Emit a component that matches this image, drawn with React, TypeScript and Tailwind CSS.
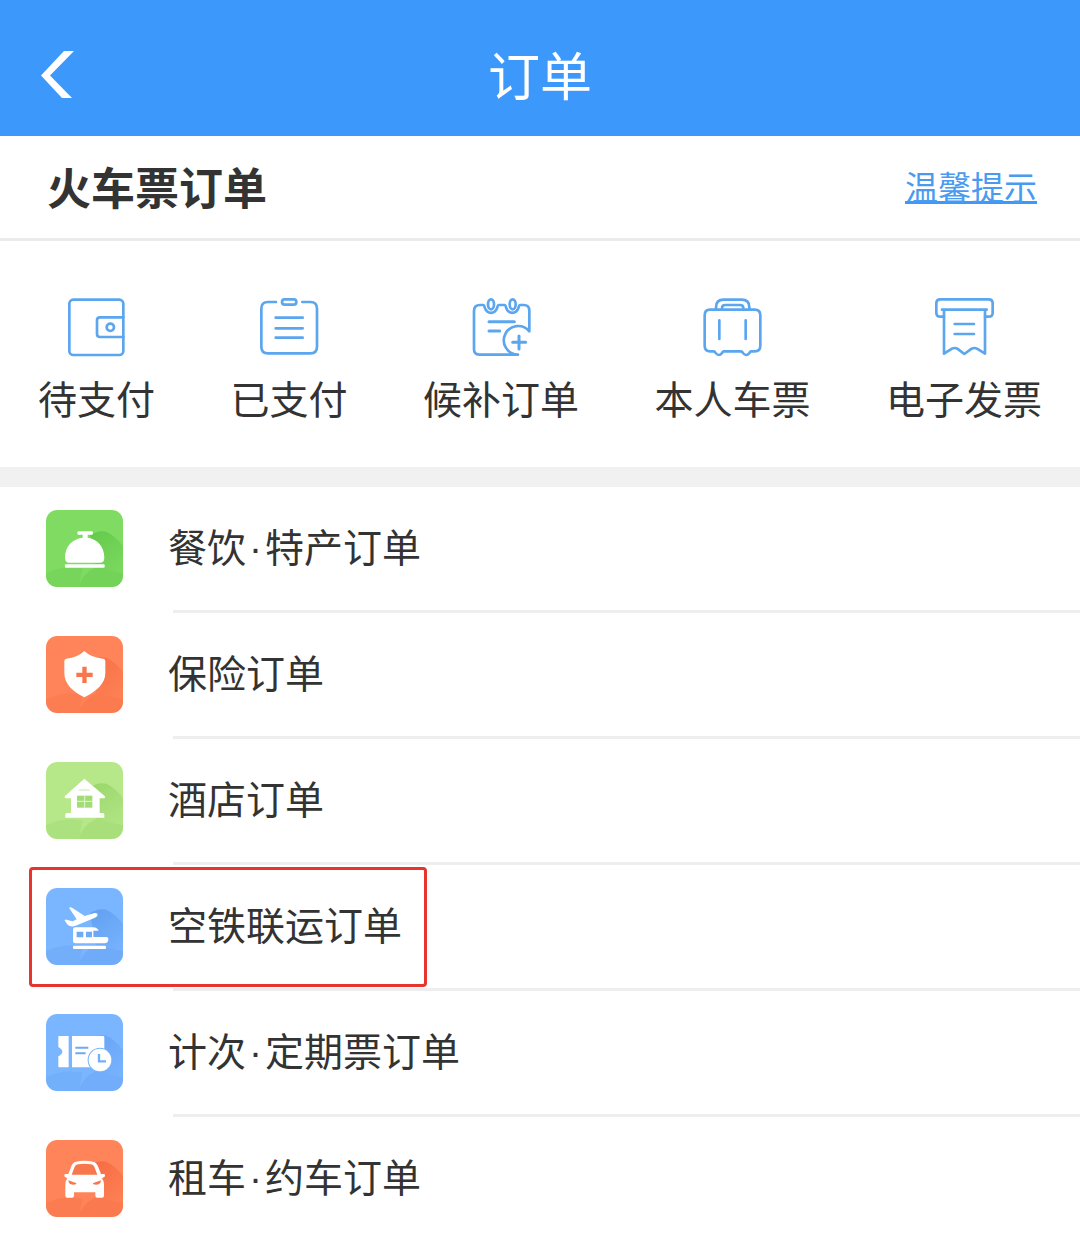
import type { ReactNode } from 'react';

interface QuickEntry {
  label: string;
  icon: ReactNode;
}

interface OrderEntry {
  label: string;
  icon: ReactNode;
  highlighted?: boolean;
}

const LineIcon = ({ children }: { children: ReactNode }) => (
  <svg
    viewBox="0 0 180 180"
    className="size-[60px] text-[#5ba6ee]"
    fill="none"
    stroke="currentColor"
    strokeWidth="8"
    strokeLinecap="round"
    strokeLinejoin="round"
    aria-hidden="true"
  >
    {children}
  </svg>
);

interface TileProps {
  id: string;
  base: string;
  shade: string;
  children: ReactNode;
}

// Rounded app tile with a soft long shadow behind the white glyph
const Tile = ({ id, base, shade, children }: TileProps) => (
  <svg viewBox="0 0 231 231" className="size-[77px] shrink-0" aria-hidden="true">
    <defs>
      <clipPath id={`${id}-clip`}>
        <rect width="231" height="231" rx="34" />
      </clipPath>
      <linearGradient id={`${id}-shadow`} x1="0.2" y1="0" x2="0.8" y2="1">
        <stop offset="0" stopColor={shade} />
        <stop offset="1" stopColor={shade} stopOpacity="0.2" />
      </linearGradient>
    </defs>
    <g clipPath={`url(#${id}-clip)`}>
      <rect width="231" height="231" fill={base} />
      <path d="M0 190 Q50 164 110 176 L98 231 H0z" fill={shade} opacity="0.35" />
      <path d="M98 231 Q108 190 150 172 L231 190 V231z" fill={shade} opacity="0.5" />
      <path d="M132 76 Q160 58 182 66 Q206 76 231 108 V190 L150 172z" fill={`url(#${id}-shadow)`} />
    </g>
    {children}
  </svg>
);

const quickEntries: QuickEntry[] = [
  {
    label: '待支付',
    icon: (
      <LineIcon>
        <rect x="7" y="8" width="162" height="166" rx="12" />
        <path d="M169 61H99q-9 0-9 9v41q0 9 9 9h70" />
        <circle cx="130" cy="91" r="11" />
      </LineIcon>
    ),
  },
  {
    label: '已支付',
    icon: (
      <LineIcon>
        <path d="M51 15H27q-20 0-20 20v114q0 20 20 20h127q20 0 20-20V35q0-20-20-20h-24" />
        <rect x="69" y="7" width="43" height="16" rx="8" />
        <path d="M50 62h81M50 94h81M50 122h81" />
      </LineIcon>
    ),
  },
  {
    label: '候补订单',
    icon: (
      <LineIcon>
        <path d="M141 173H25q-16 0-16-16V42q0-18 18-18h10c4 0 3 5 5 10 7 18 29 18 36 0 2-5 1-10 5-10h18c4 0 3 5 5 10 7 18 29 18 36 0 2-5 1-10 5-10h11q17 0 17 17v62A43 43 0 1 0 141 173" />
        <ellipse cx="60" cy="22" rx="9" ry="15" />
        <ellipse cx="125" cy="22" rx="9" ry="15" />
        <path d="M54 74h76M54 102h32M125 136h39M144 117v39" strokeWidth="9" />
      </LineIcon>
    ),
  },
  {
    label: '本人车票',
    icon: (
      <LineIcon>
        <path d="M24 38h134q17 0 17 17v91q0 17-17 17h-11q-2 0-5 5-9 12-19 0-3-5-6-5H65q-2 0-5 5-9 12-19 0-3-5-6-5H25q-17 0-17-17V55q0-17 16-17z" />
        <path d="M42 37V31q0-23 23-23h54q23 0 23 23v6" />
        <path d="M60 37v-4q0-9 10-9h44q10 0 10 9v4" />
        <path d="M52 70v56M131 70v56" />
      </LineIcon>
    ),
  },
  {
    label: '电子发票',
    icon: (
      <LineIcon>
        <path d="M30 59H19q-12 0-12-12V19Q7 7 19 7h145q12 0 12 12v28q0 12-12 12h-11" />
        <path d="M24 38h134M30 38v132l24-15q8-4 16 0l21 16 22-16q8-4 16 0l24 15V38" />
        <path d="M62 81h58M62 111h58" />
      </LineIcon>
    ),
  },
];

const orderEntries: OrderEntry[] = [
  {
    label: '餐饮·特产订单',
    icon: (
      <Tile id="food" base="#80db62" shade="#65cb4d">
        <path
          d="M97 64h41q3 0 3 5t-3 5h-13v9c30 4 50 28 50 60q0 15-13 15H70q-13 0-13-15c0-32 20-56 53-60v-9H97q-3 0-3-5t3-5z"
          fill="#fff"
        />
        <rect x="57" y="163" width="119" height="10" rx="3" fill="#fff" />
      </Tile>
    ),
  },
  {
    label: '保险订单',
    icon: (
      <Tile id="insurance" base="#ff8459" shade="#f87146">
        <path
          d="M115 45c14 13 34 21 57 23q6 1 6 7v36c0 33-27 54-63 73-36-19-60-40-60-73V75q0-6 6-7c22-2 40-10 54-23z"
          fill="#fff"
        />
        <path d="M109 92h13v18h18v13h-18v18h-13v-18H91v-13h18z" fill="#f9754b" />
      </Tile>
    ),
  },
  {
    label: '酒店订单',
    icon: (
      <Tile id="hotel" base="#b6e789" shade="#9bd86d">
        <path
          d="M115 50l61 52q4 4-1 7h-14v44h10q4 0 4 5v9H58v-9q0-5 4-5h13v-44H59q-6-3-2-7z"
          fill="#fff"
        />
        <rect x="93" y="101" width="46" height="36" fill="#a2dc74" />
        <path d="M93 118h46M116 101v36" stroke="#e5f6d6" strokeWidth="3" />
        <path d="M99 84h32" stroke="#d6efc2" strokeWidth="4" />
      </Tile>
    ),
  },
  {
    label: '空铁联运订单',
    highlighted: true,
    icon: (
      <Tile id="air-rail" base="#7ab5ff" shade="#63a1f1">
        <path
          d="M69 59q5-3 9 0l38 25 30-9q9-1 9 6-1 5-8 8l-58 24q-14 6-24-3L56 98q1-4 5-3l19 5 12-6z"
          fill="#fff"
        />
        <path
          d="M88 118h54q9 0 15 7v3h-15v19h39q6 0 6 6 0 13-12 13H88q-7 0-7-7v-34q0-7 7-7z"
          fill="#fff"
        />
        <path d="M92 131h20v17H92zM120 131h18v17h-18z" fill="#6eaaf8" />
        <rect x="81" y="173" width="99" height="10" rx="3" fill="#fff" />
      </Tile>
    ),
  },
  {
    label: '计次·定期票订单',
    icon: (
      <Tile id="pass" base="#7ab5ff" shade="#68a5f5">
        <path d="M39 66h29v94H39q-2 0-2-3v-30q12-7 12-14t-12-14V69q0-3 2-3z" fill="#fff" />
        <path d="M78 66h93q4 0 4 4v64h-38v26H78z" fill="#fff" />
        <path d="M88 101h39M88 118h31" stroke="#70a9f2" strokeWidth="6" />
        <circle cx="162" cy="138" r="37" fill="#78b2fc" />
        <circle cx="162" cy="138" r="34" fill="#fff" />
        <path d="M159 120v22h21" fill="none" stroke="#74aef9" strokeWidth="7" />
      </Tile>
    ),
  },
  {
    label: '租车·约车订单',
    icon: (
      <Tile id="car" base="#ff8459" shade="#f76d43">
        <path
          d="M87 66q28-7 57 0 9 3 14 18l7 18h10q4 2 1 8l-8 5q6 8 6 18v34q0 6-6 6h-14q-6 0-6-6v-10H84v10q0 6-6 6H64q-6 0-6-6v-34q0-11 6-18l-8-5q-3-6 1-8h10l7-18q5-15 13-18z"
          fill="#fff"
        />
        <path d="M86 80q3-6 10-7 20-3 39 0 7 1 10 7l9 24H77z" fill="#f9774c" />
        <path d="M67 121l23 8q3 2 0 4-16 3-21-4zM165 121l-23 8q-3 2 0 4 16 3 21-4z" fill="#f9774c" />
      </Tile>
    ),
  },
];

export default function App() {
  return (
    <div className="min-h-screen bg-white font-['Liberation_Sans','Noto_Sans_CJK_SC',sans-serif] text-[#333333]">
      <header className="relative flex h-34 items-center justify-center bg-[#3d98fc] pt-5 text-white">
        <button type="button" aria-label="返回" className="absolute left-9 top-[47px] p-1">
          <svg viewBox="0 0 36 48" className="h-12 w-9" fill="currentColor" aria-hidden="true">
            <path d="M24 0h10L10 24.500 32 47H22L1 24.500z" />
          </svg>
        </button>
        <h1 className="text-[52px] leading-[60px]">订单</h1>
      </header>

      <main>
        <section>
          <div className="flex h-[105px] items-center justify-between border-b-3 border-[#ebebeb] pl-[47px] pr-[43px] pt-1.5">
            <h2 className="text-[44px] font-bold leading-[60px]">火车票订单</h2>
            <a
              href="#tips"
              className="border-b-3 border-[#3d98fc] text-[33px] leading-6 text-[#4a9bf0]"
            >
              温馨提示
            </a>
          </div>
          <nav className="flex justify-between px-[38px] pb-9 pt-14">
            {quickEntries.map(({ label, icon }) => (
              <a key={label} href="#orders" className="flex flex-col items-center gap-3.5">
                {icon}
                <span className="text-[39px] leading-[60px]">{label}</span>
              </a>
            ))}
          </nav>
        </section>

        <div className="h-5 bg-[#f1f1f1]" />

        <ul>
          {orderEntries.map(({ label, icon, highlighted }, index) => (
            <li key={label} className="relative">
              <a href="#order" className="flex items-center gap-[45px] py-[23px] pl-[46px]">
                {icon}
                <span className="text-[39px] leading-[60px]">
                  {label.split('·').map((part, i) => (
                    <span key={part}>
                      {i > 0 && <span className="px-[3px]">·</span>}
                      {part}
                    </span>
                  ))}
                </span>
              </a>
              {index < orderEntries.length - 1 && (
                <hr className="ml-[173px] border-t-3 border-[#eeeeee]" />
              )}
              {highlighted && (
                <div className="pointer-events-none absolute left-[29px] top-0.5 h-[120px] w-[398px] rounded-sm border-3 border-[#e6352f]" />
              )}
            </li>
          ))}
        </ul>
      </main>
    </div>
  );
}
